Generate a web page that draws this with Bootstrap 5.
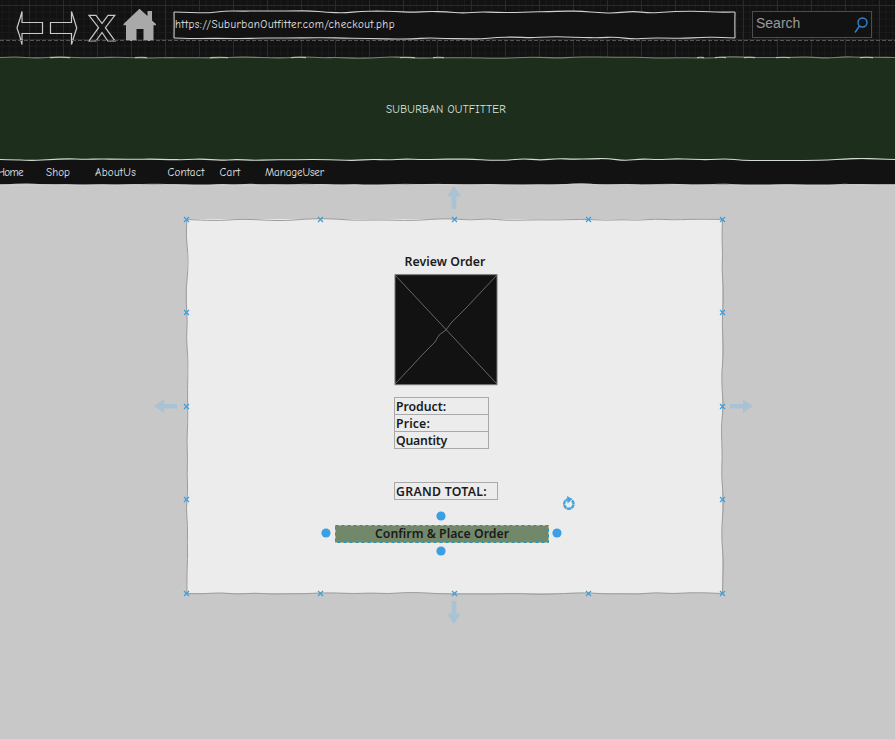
<!DOCTYPE html>
<html lang="en">
<head>
<meta charset="utf-8">
<title>Suburban Outfitter - Checkout</title>
<meta name="viewport" content="width=device-width, initial-scale=1">
<link href="https://cdn.jsdelivr.net/npm/bootstrap@5.3.0/dist/css/bootstrap.min.css" rel="stylesheet">
<style>
body{background:#c8c8c8;width:895px;height:739px;font-family:"Comic Sans MS","Comic Neue","Open Sans",sans-serif;line-height:1}
.toolbar{height:57px;background-color:#121212;padding-left:16px;
 background-image:linear-gradient(90deg,#2a2a2a 1px,transparent 1px),linear-gradient(#2a2a2a 1px,transparent 1px),linear-gradient(90deg,#1a1a1a 1px,transparent 1px),linear-gradient(#1a1a1a 1px,transparent 1px);
 background-size:34px 34px,34px 34px,6.8px 34px,34px 6.8px;background-position:29px 0,0 5px,29px 0,0 5px}
.page-break{left:0;top:40px;width:895px;height:1px;background:repeating-linear-gradient(90deg,#555 0 4px,transparent 4px 6px)}
.address{width:562px;height:27px;margin-left:17px;margin-top:11px;background:#121212;color:#e8e8e8;font-size:11px;padding-left:1px}
.search{width:120px;height:27px;margin-left:16px;margin-top:11px;background:#121212;border:1px solid #4d4d4d;color:#9a9a9a;font:14px "Liberation Sans",Arial,sans-serif;padding:0 3px 3px 3px}
.banner{height:103px;background:#1e2e1d;color:#dfe6df;font-size:11px;padding:2px 3px 0 0}
.site-nav{height:24px;background:#121212;color:#e6e6e6;font-size:11px}
.site-nav a{color:inherit;text-decoration:none;white-space:nowrap;display:block;flex:none}
.workspace{height:555px;padding:35px 0 0 187px}
.sheet{width:535px;height:374px;background:#ececec;padding:35px 0 0 148px;color:#1b1b1b;font:600 12.3px "Noto Sans","Open Sans",sans-serif;line-height:15px}
.sheet-title{width:104px;margin-left:58px;height:20px;white-space:nowrap}
.picture{margin-left:59px;width:104px;height:112px;display:block}
.fields{width:95px;margin:11px 0 0 59px}
.field{height:18px;border:1px solid #a9a9a9;margin-bottom:-1px;padding:1px 0 0 1px;white-space:nowrap}
.total{width:104px;margin:34px 0 0 59px}
.confirm{width:214px;height:18px;margin-top:25px;background:#72886a;border:0;color:#1b1b1b;font:inherit;padding:0 0 1px}
.fit{display:inline-block;white-space:nowrap}
.overlay{left:0;top:0;pointer-events:none}
</style>
</head>
<body class="position-relative overflow-hidden">
<header class="toolbar d-flex align-items-start">
  <svg class="flex-shrink-0" width="141" height="50" viewBox="16 0 141 50" fill="none" stroke="#c9c9c9" stroke-width="1.2">
    <path d="M42.500 22.500H22V11.500Q20 19 17 28Q20 36 22 44.500V33.500H42.500Z"/>
    <path d="M50.500 22.500H71.500V11.500Q74 19 76.700 28Q74 36 71.500 44.500V33.500H50.500Z"/>
    <path d="M89 15.300H96L102 23.500L108 15.300H114.800L105.400 27.700L115 41H107.800L102 32.500L96 41H89L98.600 27.700Z"/>
    <path d="M139.500 8.700L147.500 16V11H152V20.500L156 24V25.300H153.500V41H143.500V29H136.500V41H126V25.300H123.500V24Z" fill="#a9a9a9" stroke="none"/>
  </svg>
  <div class="address d-flex align-items-center flex-shrink-0"><span class="fit" data-width="220">https://SuburbanOutfitter.com/checkout.php</span></div>
  <div class="search d-flex align-items-center justify-content-between flex-shrink-0"><span>Search</span>
    <svg class="mt-1" width="14" height="16" viewBox="0 0 14 16" fill="none" stroke="#2f86d2" stroke-width="1.4"><circle cx="8.500" cy="5.500" r="4.500"/><path d="M5.500 9L1 15.500"/></svg>
  </div>
</header>
<div class="page-break position-absolute"></div>
<section class="banner d-flex align-items-center justify-content-center"><span class="fit" data-width="120">SUBURBAN OUTFITTER</span></section>
<nav class="site-nav d-flex align-items-center">
  <a href="#" style="margin-left:-3px"><span class="fit" data-width="26">Home</span></a>
  <a href="#" style="margin-left:23px"><span class="fit" data-width="24">Shop</span></a>
  <a href="#" style="margin-left:25px"><span class="fit" data-width="41">AboutUs</span></a>
  <a href="#" style="margin-left:31.500px"><span class="fit" data-width="37">Contact</span></a>
  <a href="#" style="margin-left:15px"><span class="fit" data-width="21">Cart</span></a>
  <a href="#" style="margin-left:24.500px"><span class="fit" data-width="59">ManageUser</span></a>
</nav>
<main class="workspace">
  <section class="sheet">
    <div class="sheet-title text-center"><span class="fit" data-width="81">Review Order</span></div>
    <svg class="picture" viewBox="0 0 104 112" fill="none" stroke="#666"><rect x="1" y=".7" width="102" height="110" fill="#121212" stroke="#777"/><path d="M1 1L103 110M103 1L73 33L57 49L52 56L45 61L41 68L30 79L17 93L1 110"/></svg>
    <div class="fields"><div class="field"><span class="fit" data-width="50">Product:</span></div><div class="field"><span class="fit" data-width="34">Price:</span></div><div class="field"><span class="fit" data-width="51">Quantity</span></div></div>
    <div class="field total"><span class="fit" data-width="91">GRAND TOTAL:</span></div>
    <button class="confirm d-flex align-items-center justify-content-center"><span class="fit" data-width="134">Confirm &amp; Place Order</span></button>
  </section>
</main>
<svg class="overlay position-absolute" width="895" height="739" viewBox="0 0 895 739" fill="none">
  <g id="edges"></g>
  <g id="grips"></g>
  <g fill="#a9c3d2">
    <path d="M454 186L461 196.500H456.500V209H451.500V196.500H447Z"/>
    <path d="M454 624L447 613.500H451.500V601H456.500V613.500H461Z"/>
    <path d="M154 406L164 399.500V404H177V408.500H164V413Z"/>
    <path d="M753 406L743 399.500V404H730V408.500H743V413Z"/>
  </g>
  <g fill="#3aa0e3"><circle cx="441" cy="516" r="4.600"/><circle cx="441" cy="551" r="4.600"/><circle cx="326" cy="533" r="4.600"/><circle cx="557" cy="533" r="4.600"/></g>
  <rect x="335.500" y="525.500" width="213" height="17" stroke="#b9b98a"/>
  <rect x="335.500" y="525.500" width="213" height="17" stroke="#1c92c4" stroke-dasharray="3 3"/>
  <path d="M572 500.500A4.700 4.700 0 1 1 567.500 499.500" stroke="#45a4dd" stroke-width="2.400" stroke-dasharray="4 .4"/>
  <path d="M567 496L572.500 499L567.500 503.500Z" fill="#45a4dd"/>
</svg>
<script src="https://cdn.jsdelivr.net/npm/bootstrap@5.3.0/dist/js/bootstrap.bundle.min.js"></script>
<script>
// Space the letters so each label fills its set width.
document.querySelectorAll('.fit').forEach(function(el){
  var n=el.textContent.length, gap=(+el.dataset.width-el.getBoundingClientRect().width)/n;
  el.style.letterSpacing=gap.toFixed(3)+'px';
});
// Hand-drawn edges: jitter a straight line every 17 px.
var seed=7, NS='http://www.w3.org/2000/svg';
function rnd(){seed=(seed*16807)%2147483647;return seed/2147483647-.5;}
function line(x1,y1,x2,y2,amp){
  var len=Math.hypot(x2-x1,y2-y1),n=Math.max(1,Math.round(len/17)),p=[];
  for(var i=0;i<=n;i++){
    var j=(i&&i<n)?rnd()*2*amp:0,t=i/n;
    p.push([x1+(x2-x1)*t+(y1===y2?0:j),y1+(y2-y1)*t+(y1===y2?j:0)]);
  }
  var d='M'+p[0];
  for(i=1;i<n;i++)d+='Q'+p[i]+' '+[(p[i][0]+p[i+1][0])/2,(p[i][1]+p[i+1][1])/2];
  return d+'L'+p[n];
}
function add(parent,d,stroke,w,fill){
  var e=document.createElementNS(NS,'path');
  e.setAttribute('d',d);
  if(stroke){e.setAttribute('stroke',stroke);e.setAttribute('stroke-width',w);}
  if(fill)e.setAttribute('fill',fill);
  document.getElementById(parent).appendChild(e);
}
add('edges',line(0,57.5,895,57.5,.9),'#77876a',1.1);
[[50,70],[135,147],[210,228],[291,306],[400,415],[433,444],[697,704],[715,726],[744,755],[776,790],[860,873]].forEach(function(r){
  add('edges','M'+r[0]+' 57.6Q'+(r[0]+r[1])/2+' 56.8 '+r[1]+' 57.6','#b9c0b0',1.1);
});
add('edges',line(0,159.5,895,159.5,1.2),'#d3dad3',1.1);
add('edges','M0 183.500H895V184.500H0Z',null,0,'#121212');
add('edges',line(0,184.7,895,184.7,1.3)+'V187H0Z',null,0,'#c8c8c8');
add('edges',line(0,184.9,895,184.9,1.2),'#d0d0d0',.8);
[[174,12,735,12],[735,12,735,38],[735,38,174,38],[174,38,174,12]].forEach(function(a){
  add('edges',line(a[0],a[1],a[2],a[3],a[0]===a[2]?.3:1.2),'#d2d2d2',1.1);
});
[[187,219.5,722.5,219.5],[722.5,219.5,722.5,593.5],[722.5,593.5,187,593.5],[187,593.5,187,219.5]].forEach(function(a){
  add('edges',line(a[0],a[1],a[2],a[3],1.1),'#9c9c9c',1);
});
// Selection grips around the sheet.
[[186.5,219.5],[320.5,219.5],[454.5,219.5],[588.5,219.5],[722.5,219.5],[186.5,593.5],[320.5,593.5],[454.5,593.5],[588.5,593.5],[722.5,593.5],
 [186.5,312.5],[186.5,406.5],[186.5,499.5],[722.5,312.5],[722.5,406.5],[722.5,499.5]].forEach(function(p){
  add('grips','M'+(p[0]-2.5)+' '+(p[1]-2.5)+'l5 5m0-5l-5 5','#3d9edb',1.2);
});
</script>
</body>
</html>
